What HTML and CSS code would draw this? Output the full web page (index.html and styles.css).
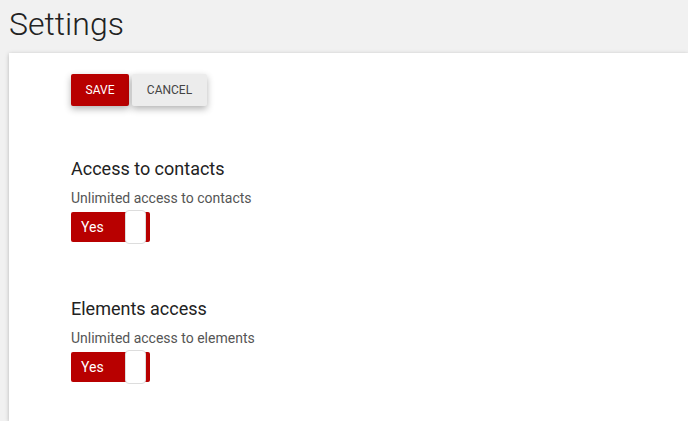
FILE: index.html
```html
<!DOCTYPE html>
<html lang="en">
<head>
    <meta charset="UTF-8">
    <title>Settings</title>
    <link rel="stylesheet" href="styles.css">
</head>
<body>
    <h1 class="page-title">Settings</h1>
    <div class="card">
        <div class="actions">
            <button class="btn btn-save">Save</button>
            <button class="btn btn-cancel">Cancel</button>
        </div>

        <div class="setting">
            <h2>Access to contacts</h2>
            <p>Unlimited access to contacts</p>
            <div class="toggle">
                <span class="toggle-label">Yes</span>
                <span class="toggle-knob"></span>
            </div>
        </div>

        <div class="setting">
            <h2>Elements access</h2>
            <p>Unlimited access to elements</p>
            <div class="toggle">
                <span class="toggle-label">Yes</span>
                <span class="toggle-knob"></span>
            </div>
        </div>
    </div>
</body>
</html>
```

FILE: styles.css
```css
body {
    margin: 0;
    background: #f1f1f1;
    font-family: Roboto, "Liberation Sans", sans-serif;
    color: #222;
    height: 421px;
    overflow: hidden;
}

.page-title {
    margin: 0;
    padding: 4px 0 0 9px;
    height: 49px;
    font-size: 32px;
    font-weight: 300;
    line-height: 40px;
    color: #222;
}

.card {
    margin-left: 9px;
    background: #fff;
    height: 368px;
    box-sizing: border-box;
    padding: 21px 0 0 62px;
    box-shadow: 0 1px 4px rgba(0, 0, 0, 0.25);
}

.actions {
    display: flex;
    gap: 3px;
}

.btn {
    height: 32px;
    border: none;
    border-radius: 2px;
    font-family: Roboto, "Liberation Sans", sans-serif;
    font-size: 12px;
    text-transform: uppercase;
    box-shadow: 0 3px 7px rgba(0, 0, 0, 0.3);
    cursor: pointer;
}

.btn-save {
    width: 58px;
    background: #b80000;
    color: #fff;
}

.btn-cancel {
    width: 75px;
    background: #ececec;
    color: #444;
}

.setting {
    margin-top: 52px;
}

.setting + .setting {
    margin-top: 56px;
}

.setting h2 {
    margin: 0;
    font-size: 18px;
    font-weight: 400;
    line-height: 22px;
    color: #222;
}

.setting p {
    margin: 10px 0 6px;
    font-size: 14px;
    line-height: 16px;
    color: #555;
}

.toggle {
    display: flex;
    align-items: center;
    width: 79px;
    height: 30px;
    background: #b80000;
    border-radius: 2px;
}

.toggle-label {
    width: 54px;
    padding-left: 10px;
    box-sizing: border-box;
    font-size: 14px;
    color: #fff;
}

.toggle-knob {
    width: 21px;
    height: 34px;
    background: #fff;
    border: 1px solid #ddd;
    border-radius: 4px;
    box-sizing: border-box;
}
```
